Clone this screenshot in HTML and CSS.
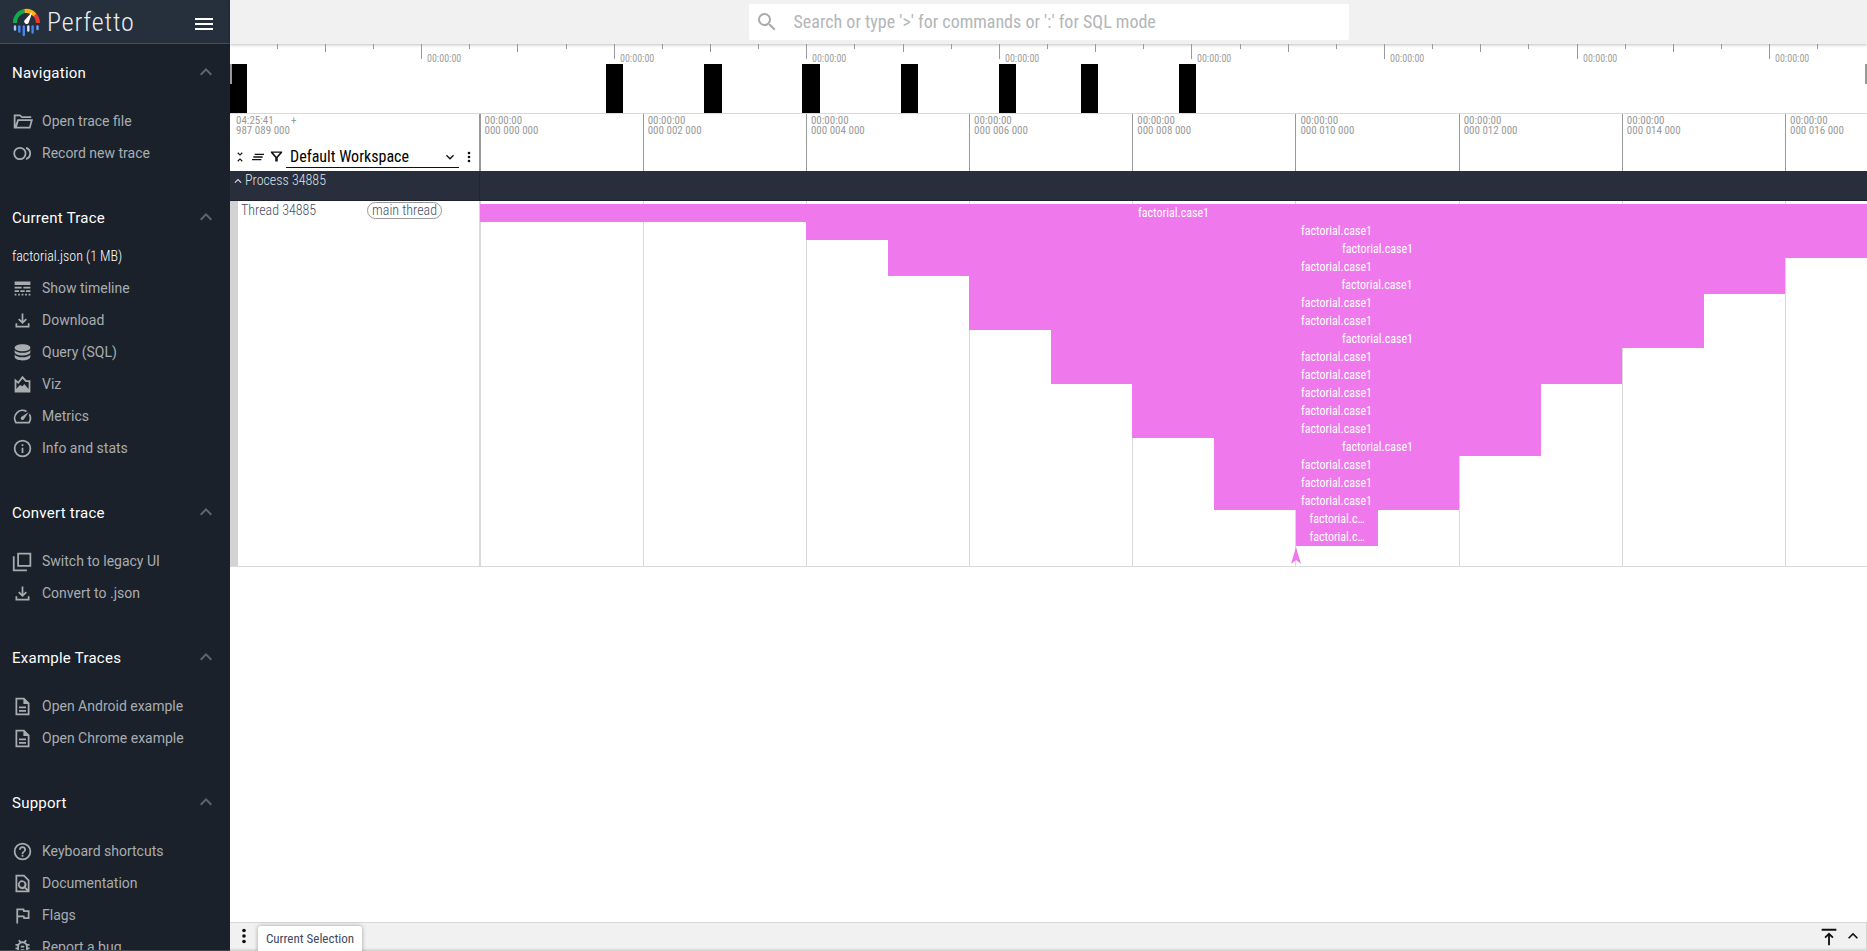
FILE: index.html
```html
<!DOCTYPE html>
<html lang="en">
<head>
<meta charset="utf-8">
<title>Perfetto UI</title>
<link rel="stylesheet" href="styles.css">
</head>
<body>
<svg class="sprite" aria-hidden="true">
  <symbol id="up" viewBox="0 0 24 24"><path d="M12 8l-6 6 1.41 1.41L12 10.83l4.59 4.58L18 14z"/></symbol>
  <symbol id="down" viewBox="0 0 24 24"><path d="M16.59 8.59L12 13.17 7.41 8.59 6 10l6 6 6-6z"/></symbol>
  <symbol id="folder" viewBox="0 0 24 24"><path d="M2 4h7.500l2 2H22v2H11L9 6H4v9.500L6.200 9.500H24L21 20H2zM7.700 11.500L5.700 18h13.900l1.800-6.500z"/></symbol>
  <symbol id="record" viewBox="0 0 24 24"><path d="M9 4.500a7.500 7.500 0 1 0 0 15 7.500 7.500 0 0 0 0-15zm0 13a5.500 5.500 0 1 1 0-11 5.500 5.500 0 0 1 0 11zM16 4.700v2.100a5.500 5.500 0 0 1 0 10.400v2.100a7.500 7.500 0 0 0 0-14.600z"/></symbol>
  <symbol id="timeline" viewBox="0 0 24 24"><path d="M3 16h5v-2H3v2zm6.500 0h5v-2h-5v2zm6.500 0h5v-2h-5v2zM3 20h2v-2H3v2zm4 0h2v-2H7v2zm4 0h2v-2h-2v2zm4 0h2v-2h-2v2zm4 0h2v-2h-2v2zM3 12h8v-2H3v2zm10 0h8v-2h-8v2zM3 4v4h18V4H3z"/></symbol>
  <symbol id="download" viewBox="0 0 24 24"><path d="M18 15v3H6v-3H4v5h16v-5h-2zm-1-4l-1.410-1.410L13 12.170V4h-2v8.170L8.410 9.590 7 11l5 5 5-5z"/></symbol>
  <symbol id="database" viewBox="0 0 24 24"><path d="M12 2.500c5 0 9 1.700 9 4s-4 4-9 4-9-1.700-9-4 4-4 9-4z"/><path d="M3 9c1 2 4.800 3.300 9 3.300S20 11 21 9v2.500c0 2.300-4 4-9 4s-9-1.700-9-4zM3 14.200c1 2 4.800 3.300 9 3.300s8-1.300 9-3.300v2.300c0 2.800-4 4.500-9 4.500s-9-1.700-9-4.500z"/></symbol>
  <symbol id="viz" viewBox="0 0 24 24"><path fill-rule="evenodd" d="M3 5l4 3.500 5-6.500 4.500 5H21v14H3zM5 9.300V17l4-4.500 3 1.500 2-2.500 5 5.500V9h-3.400L12 5.300 7.300 11.300z"/></symbol>
  <symbol id="speed" viewBox="0 0 24 24"><path d="M20.380 8.570l-1.230 1.850a8 8 0 0 1-.22 7.580H5.070A8 8 0 0 1 15.580 6.850l1.850-1.230A10 10 0 0 0 3.350 19a2 2 0 0 0 1.720 1h13.850a2 2 0 0 0 1.740-1 10 10 0 0 0-.27-10.440zm-9.790 6.840a2 2 0 0 0 2.830 0l5.660-8.490-8.490 5.660a2 2 0 0 0 0 2.830z"/></symbol>
  <symbol id="info" viewBox="0 0 24 24"><path d="M11 7h2v2h-2zm0 4h2v6h-2zm1-9a10 10 0 1 0 0 20 10 10 0 0 0 0-20zm0 18a8 8 0 1 1 0-16 8 8 0 0 1 0 16z"/></symbol>
  <symbol id="copy" viewBox="0 0 24 24"><path d="M3 6H1v17h16v-2H3V6zM6 2v16h16V2H6zm14 14H8V4h12v12z"/></symbol>
  <symbol id="doc" viewBox="0 0 24 24"><path d="M8 16h8v2H8zm0-4h8v2H8zm6-10H4v20h16V8l-6-6zm4 18H6V4h7v5h5v11z"/></symbol>
  <symbol id="help" viewBox="0 0 24 24"><path d="M11 18h2v-2h-2v2zm1-16a10 10 0 1 0 0 20 10 10 0 0 0 0-20zm0 18a8 8 0 1 1 0-16 8 8 0 0 1 0 16zm0-14a4 4 0 0 0-4 4h2a2 2 0 1 1 4 0c0 2-3 1.750-3 5h2c0-2.250 3-2.500 3-5a4 4 0 0 0-4-4z"/></symbol>
  <symbol id="find" viewBox="0 0 24 24"><path d="M14 2H4v20h16V8l-6-6zM6 4h7.170L18 8.830v9.530l-2.170-2.170a5 5 0 1 0-1.420 1.420L16.800 20H6V4zm5.500 12a2.800 2.800 0 1 1 0-5.600 2.800 2.800 0 0 1 0 5.600z"/></symbol>
  <symbol id="flag" viewBox="0 0 24 24"><path d="M12.360 6l.4 2H18v6h-3.360l-.4-2H7V6h5.360M14 4H5v17h2v-7h5.600l.4 2h7V6h-5.600L14 4z"/></symbol>
  <symbol id="bug" viewBox="0 0 24 24"><path d="M20 8h-2.810a5.990 5.990 0 0 0-1.820-1.960L17 4.410 15.590 3l-2.170 2.170a6 6 0 0 0-2.830 0L8.410 3 7 4.410l1.620 1.630A6 6 0 0 0 6.810 8H4v2h2.090L6 11v1H4v2h2v1l.09 1H4v2h2.810a6 6 0 0 0 10.380 0H20v-2h-2.090l.09-1v-1h2v-2h-2v-1l-.09-1H20V8zm-4 7a4 4 0 0 1-8 0v-4a4 4 0 0 1 8 0v4zm-6-1h4v2h-4v-2zm0-4h4v2h-4v-2z"/></symbol>
  <symbol id="menu" viewBox="0 0 24 24"><path d="M3 18h18v-2H3v2zm0-5h18v-2H3v2zm0-7v2h18V6H3z"/></symbol>
  <symbol id="search" viewBox="0 0 24 24"><path d="M15.500 14h-.79l-.28-.27A6.470 6.470 0 0 0 16 9.500 6.500 6.500 0 1 0 9.500 16c1.610 0 3.090-.59 4.230-1.570l.27.28v.79l5 4.990L20.490 19l-4.990-5zm-6 0a4.500 4.500 0 1 1 0-9 4.500 4.500 0 0 1 0 9z"/></symbol>
  <symbol id="more" viewBox="0 0 24 24"><circle cx="12" cy="6" r="2"/><circle cx="12" cy="12" r="2"/><circle cx="12" cy="18" r="2"/></symbol>
  <symbol id="collapse" viewBox="0 0 24 24"><path d="M7.410 18.590L8.830 20 12 16.830 15.170 20l1.410-1.410L12 14zM16.590 5.410L15.170 4 12 7.170 8.830 4 7.410 5.410 12 10z"/></symbol>
  <symbol id="clear" viewBox="0 0 24 24"><path d="M5 13h14v-2H5v2zm-2 4h14v-2H3v2zM7 7v2h14V7H7z"/></symbol>
  <symbol id="filter" viewBox="0 0 24 24"><path d="M3 4h18v2l-7 8v6h-4v-6L3 6zm3.500 2l5.500 6.500L17.500 6z"/></symbol>
  <symbol id="top" viewBox="0 0 24 24"><path d="M12 7l-5 5 1.400 1.400 2.600-2.600V21h2V10.800l2.600 2.600L17 12zM4 3v2.200h16V3z"/></symbol>
</svg>

<div class="app">
  <aside class="sidebar">
    <header class="brand">
      <svg class="logo" viewBox="0 0 27 29">
        <g fill="none" stroke-width="4">
          <path d="M2 15A11.500 11.500 0 0 1 11.500 3" stroke="#12ab4b"/>
          <path d="M11.500 3A11.500 11.500 0 0 1 22 7.200" stroke="#fbb30b"/>
          <path d="M22 7.200A11.500 11.500 0 0 1 25 15" stroke="#ea3b2e"/>
        </g>
        <path d="M19.500 3.500L15.700 14.800a2.500 2.500 0 0 1-4.500-2z" fill="#fff"/>
        <g stroke-width="2.400" stroke-linecap="round" stroke="#4285f4">
          <path d="M2 18.500v3" stroke="#a9c8f6"/><path d="M6.300 18.500v5"/><path d="M10.800 18.500v8.500"/><path d="M15.300 18.500v4" stroke="#d6e5fb"/><path d="M19.600 18.500v6"/><path d="M24.500 18.500v2.500" stroke="#69a0f4"/>
        </g>
      </svg>
      <span class="brand-name">Perfetto</span>
      <svg class="menu"><use href="#menu"/></svg>
    </header>
    <nav class="nav">
      <section>
        <h1>Navigation<svg><use href="#up"/></svg></h1>
        <ul>
          <li><svg><use href="#folder"/></svg>Open trace file</li>
          <li><svg><use href="#record"/></svg>Record new trace</li>
        </ul>
      </section>
      <section>
        <h1>Current Trace<svg><use href="#up"/></svg></h1>
        <div class="trace-name">factorial.json (1 MB)</div>
        <ul class="tight">
          <li><svg><use href="#timeline"/></svg>Show timeline</li>
          <li><svg><use href="#download"/></svg>Download</li>
          <li><svg><use href="#database"/></svg>Query (SQL)</li>
          <li><svg><use href="#viz"/></svg>Viz</li>
          <li><svg><use href="#speed"/></svg>Metrics</li>
          <li><svg><use href="#info"/></svg>Info and stats</li>
        </ul>
      </section>
      <section>
        <h1>Convert trace<svg><use href="#up"/></svg></h1>
        <ul>
          <li><svg><use href="#copy"/></svg>Switch to legacy UI</li>
          <li><svg><use href="#download"/></svg>Convert to .json</li>
        </ul>
      </section>
      <section>
        <h1>Example Traces<svg><use href="#up"/></svg></h1>
        <ul>
          <li><svg><use href="#doc"/></svg>Open Android example</li>
          <li><svg><use href="#doc"/></svg>Open Chrome example</li>
        </ul>
      </section>
      <section>
        <h1>Support<svg><use href="#up"/></svg></h1>
        <ul>
          <li><svg><use href="#help"/></svg>Keyboard shortcuts</li>
          <li><svg><use href="#find"/></svg>Documentation</li>
          <li><svg><use href="#flag"/></svg>Flags</li>
          <li><svg><use href="#bug"/></svg>Report a bug</li>
        </ul>
      </section>
    </nav>
  </aside>

  <main class="main">
    <div class="topbar">
      <div class="omnibox"><svg><use href="#search"/></svg><span>Search or type '&gt;' for commands or ':' for SQL mode</span></div>
    </div>

    <svg class="overview" viewBox="0 0 1637 69">
      <path class="tick" d="M47.500 0v5M95.500 0v8M143.500 0v5M191.500 0v15M239.500 0v5M287.500 0v8M336.500 0v5M384.500 0v15M432.500 0v5M480.500 0v8M528.500 0v5M576.500 0v15M624.500 0v5M673.500 0v8M721.500 0v5M769.500 0v15M817.500 0v5M865.500 0v8M913.500 0v5M961.500 0v15M1010.500 0v5M1058.500 0v8M1106.500 0v5M1154.500 0v15M1202.500 0v5M1250.500 0v8M1298.500 0v5M1347.500 0v15M1395.500 0v5M1443.500 0v8M1491.500 0v5M1539.500 0v15M1587.500 0v5"/>
      <g class="tick-label">
        <text x="197" y="18">00:00:00</text><text x="390" y="18">00:00:00</text><text x="582" y="18">00:00:00</text><text x="775" y="18">00:00:00</text><text x="967" y="18">00:00:00</text><text x="1160" y="18">00:00:00</text><text x="1353" y="18">00:00:00</text><text x="1545" y="18">00:00:00</text>
      </g>
      <path d="M0 20h17v49H0zM376 20h17v49h-17zM474 20h18v49h-18zM572 20h18v49h-18zM671 20h17v49h-17zM769 20h17v49h-17zM851 20h17v49h-17zM949 20h17v49h-17z"/>
      <path d="M0 20h2v20H0zM1635 20h2v20h-2z" fill="#999"/>
    </svg>

    <div class="axis">
      <div class="axis-shell">
        <div class="origin"><div>04:25:41<br>987 089 000</div><span>+</span></div>
        <div class="tools">
          <svg class="t1"><use href="#collapse"/></svg>
          <svg class="t2"><use href="#clear"/></svg>
          <svg class="t3"><use href="#filter"/></svg>
          <div class="select">Default Workspace<svg><use href="#down"/></svg></div>
          <svg class="t4"><use href="#more"/></svg>
        </div>
      </div>
      <div class="scale">
        <div>00:00:00<br>000 000 000</div><div>00:00:00<br>000 002 000</div><div>00:00:00<br>000 004 000</div><div>00:00:00<br>000 006 000</div><div>00:00:00<br>000 008 000</div><div>00:00:00<br>000 010 000</div><div>00:00:00<br>000 012 000</div><div>00:00:00<br>000 014 000</div><div>00:00:00<br>000 016 000</div>
      </div>
    </div>

    <div class="process"><div class="process-shell"><svg><use href="#up"/></svg>Process 34885</div></div>

    <div class="track">
      <div class="shell"><span>Thread 34885</span><span class="chip">main thread</span></div>
      <div class="content">
        <div class="gridlines"><i></i><i></i><i></i><i></i><i></i><i></i><i></i><i></i><i></i></div>
        <div class="slices">
          <div style="margin-left:0;width:1387px">factorial.case1</div>
          <div style="margin-left:326px;width:1061px">factorial.case1</div>
          <div style="margin-left:408px;width:979px">factorial.case1</div>
          <div style="margin-left:408px;width:897px">factorial.case1</div>
          <div style="margin-left:489px;width:816px">factorial.case1</div>
          <div style="margin-left:489px;width:735px">factorial.case1</div>
          <div style="margin-left:489px;width:735px">factorial.case1</div>
          <div style="margin-left:571px;width:653px">factorial.case1</div>
          <div style="margin-left:571px;width:571px">factorial.case1</div>
          <div style="margin-left:571px;width:571px">factorial.case1</div>
          <div style="margin-left:652px;width:409px">factorial.case1</div>
          <div style="margin-left:652px;width:409px">factorial.case1</div>
          <div style="margin-left:652px;width:409px">factorial.case1</div>
          <div style="margin-left:734px;width:327px">factorial.case1</div>
          <div style="margin-left:734px;width:245px">factorial.case1</div>
          <div style="margin-left:734px;width:245px">factorial.case1</div>
          <div style="margin-left:734px;width:245px">factorial.case1</div>
          <div style="margin-left:816px;width:82px">factorial.c…</div>
          <div style="margin-left:816px;width:82px">factorial.c…</div>
        </div>
        <svg class="arrow" viewBox="0 0 10 17"><path d="M5 0l5 17-5-4-5 4z"/></svg>
      </div>
    </div>

    <div class="blank"></div>

    <footer class="drawer">
      <svg class="d1"><use href="#more"/></svg>
      <div class="tab">Current Selection</div>
      <svg class="d2"><use href="#top"/></svg>
      <svg class="d3"><use href="#up"/></svg>
    </footer>
  </main>
</div>
</body>
</html>
```
FILE: styles.css
```css
* { box-sizing: border-box; }
html, body { margin: 0; height: 100%; overflow: hidden; }
body { font-family: Roboto, sans-serif; font-size: 14px; background: #fff; }
svg { fill: currentColor; flex: none; display: block; }
.sprite { position: absolute; width: 0; height: 0; }
.app { display: flex; height: 951px; }

/* Sidebar */
.sidebar { width: 230px; flex: none; height: 951px; overflow: hidden; background: #1a212a; color: #a9adb1; display: flex; flex-direction: column; border-bottom: 1px solid #3f464f; }
.brand { height: 44px; flex: none; display: flex; align-items: flex-start; background: #262f3c; border-bottom: 1px solid #454d57; color: #fff; padding-left: 13px; }
.logo { width: 27px; height: 29px; margin-top: 8px; }
.brand-name { font-size: 26px; font-weight: 300; font-stretch: 84%; line-height: 44px; margin-left: 7px; width: 145px; color: #eceef0; letter-spacing: 0.850px; }
.menu { width: 24px; height: 24px; margin-top: 12px; }
.nav { flex: 1; min-height: 0; overflow: hidden; padding-top: 13px; }
.nav section { margin-bottom: 33px; }
.nav h1 { margin: 0; height: 32px; display: flex; align-items: center; justify-content: space-between; font-size: 15px; font-weight: 400; letter-spacing: 0.25px; color: #fff; padding: 0 12px; }
.nav h1 svg { width: 24px; height: 24px; margin-top: -2px; color: #5f666e; }
.nav ul { list-style: none; margin: 16px 0 0; padding: 0; }
.nav ul.tight { margin-top: 0; }
.nav li { height: 32px; display: flex; align-items: center; padding-left: 11.500px; gap: 9.500px; }
.nav li svg { width: 21px; height: 21px; margin-top: 1px; }
.trace-name { height: 38px; line-height: 32px; padding: 6px 12px 0; font-stretch: 75%; font-weight: 300; color: #fff; }

/* Top bar */
.main { flex: 1; min-width: 0; display: flex; flex-direction: column; }
.topbar { height: 44px; flex: none; background: #f1f1f1; display: flex; padding: 4px 0 0 519px; box-shadow: 0 1px 3px rgba(0,0,0,.25); }
.omnibox { width: 600px; height: 36px; background: #fff; border-radius: 2px; display: flex; align-items: center; gap: 14.500px; padding: 0 0 1px 6px; font-size: 18px; font-stretch: 75%; color: #b3b6b9; }
.omnibox svg { width: 24px; height: 24px; color: #aaa; margin-top: 1px; }

/* Overview */
.overview { width: 1637px; height: 69px; fill: #000; }
.tick { stroke: #999; stroke-width: 1; }
.tick-label { font-size: 10px; font-stretch: 75%; fill: #a0a0a0; }

/* Time axis */
.axis { height: 58px; flex: none; border-top: 1px solid #d9d9d9; display: flex; font-stretch: 75%; }
.axis-shell { width: 250px; flex: none; border-right: 1px solid #999; display: flex; flex-direction: column; }
.origin { height: 30px; padding: 2px 0 0 6px; font-size: 11px; line-height: 10px; color: #999; display: flex; }
.origin div { width: 55px; }
.tools { display: flex; align-items: center; height: 24px; }
.tools svg { width: 16px; height: 16px; margin-top: 1px; color: #111; }
.tools .t1 { width: 14px; height: 14px; margin-left: 3px; }
.tools .t2 { margin-left: 3px; }
.tools .t3 { width: 15px; height: 15px; margin-left: 2.500px; }
.tools .t4 { margin-left: 2px; }
.select { width: 173px; height: 24px; line-height: 21px; margin-left: 2.500px; padding: 2px 1px 0 4px; border-bottom: 1px solid #111; font-size: 16px; color: #000; display: flex; justify-content: space-between; align-items: center; }
.tools .select svg { margin-top: 0; }
.scale { flex: 1; min-width: 0; overflow: hidden; display: flex; }
.scale div { flex: none; width: 163.190px; padding: 2px 0 0 4px; border-left: 1px solid #999; font-size: 11px; line-height: 10px; color: #999; position: relative; left: -0.500px; }

/* Tracks */
.process { height: 30px; flex: none; background: #282e3c; border-top: 1px solid #25303a; border-bottom: 1px solid #1c232c; color: #dfe2e6; font-stretch: 75%; font-weight: 300; }
.process-shell { width: 250px; height: 28px; border-right: 1px solid #20262f; display: flex; align-items: flex-start; line-height: 17px; padding-left: 1px; gap: 0; }
.process-shell svg { width: 14px; height: 14px; margin-top: 2px; }
.track { height: 366px; flex: none; border-bottom: 1px solid #d9d9d9; display: flex; }
.shell { width: 249px; flex: none; border-left: 8px solid #d3d3d3; display: flex; align-items: flex-start; justify-content: space-between; padding: 1px 37px 0 3px; line-height: 17px; font-stretch: 75%; font-weight: 300; color: #3f4f66; }
.chip { height: 17px; line-height: 15px; border: 1px solid #999; border-radius: 9px; padding: 0 4px; }
.content { flex: 1; min-width: 0; position: relative; border-left: 1px solid #d9d9d9; overflow: hidden; padding-top: 3px; }
.gridlines { position: absolute; inset: 0 0 0 -0.500px; display: flex; }
.gridlines i { flex: none; width: 163.190px; border-left: 1px solid #d9d9d9; }
.slices { position: relative; }
.slices div { height: 18px; line-height: 18px; background: #ee78ec; color: #fff; font-size: 12px; font-stretch: 75%; text-align: center; }
.arrow { position: absolute; left: 811px; top: 346px; width: 10px; height: 17px; color: #ee78ec; }
.blank { flex: 1; }

/* Drawer */
.drawer { height: 29px; flex: none; background: #f1f1f1; border-top: 1px solid #d6d6d6; border-right: 1px solid #d6d6d6; box-shadow: inset 0 -3px 3px -2px rgba(0,0,0,.2); display: flex; align-items: flex-start; color: #111; }
.drawer .d1 { width: 22px; height: 22px; margin: 2px 0 0 3px; }
.tab { margin: 3px auto 0 3px; width: 104px; height: 26px; line-height: 26px; text-align: center; background: #fff; border-radius: 3px 3px 0 0; box-shadow: 0 0 4px rgba(0,0,0,.35); font-size: 13px; font-stretch: 75%; color: #3c4b5f; clip-path: inset(-4px -4px 0 -4px); }
.drawer .d2 { width: 22px; height: 22px; margin-top: 3px; margin-right: 3px; }
.drawer .d3 { width: 20px; height: 20px; margin: 3px 3px 0 0; }
```
